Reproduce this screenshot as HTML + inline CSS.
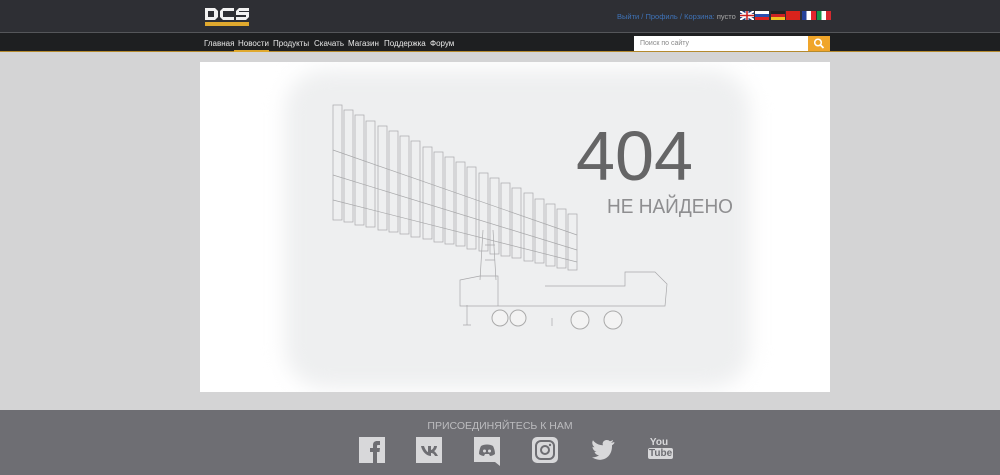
<!DOCTYPE html>
<html><head><meta charset="utf-8"><style>
*{margin:0;padding:0;box-sizing:border-box}
body{width:1000px;height:475px;overflow:hidden;background:#d4d4d5;font-family:"Liberation Sans",sans-serif;position:relative}
svg{display:block}
.top{position:absolute;left:0;top:0;width:1000px;height:33px;background:#2e2f34;border-bottom:1px solid #55565a}
.nav{position:absolute;left:0;top:33px;width:1000px;height:19px;background:#1e1f21;border-bottom:1px solid #b48a2e}
.nav a{position:absolute;top:6px;font-size:8px;color:#e8e8e8;text-decoration:none}
.links{position:absolute;left:617px;top:12px;font-size:7.5px;color:#3f73b8}
.links span{color:#aaa}
.flag{position:absolute;top:11px;width:14px;height:9px;overflow:hidden}
.search{position:absolute;left:634px;top:36px;width:174px;height:15px;background:#fff;font-size:7px;color:#888;padding:4px 6px}
.sbtn{position:absolute;left:808px;top:36px;width:22px;height:15px;background:#f0a52a}
.panel{position:absolute;left:200px;top:62px;width:630px;height:330px;background:#fff;overflow:hidden}
.cloud{position:absolute;left:85px;top:8px;width:465px;height:318px;background:#eeeff0;filter:blur(10px);border-radius:40px}
.footer{position:absolute;left:0;top:410px;width:1000px;height:65px;background:#6e6e73}
.ft{position:absolute;top:420px;left:0;width:1000px;text-align:center;font-size:10.5px;color:#bcbcbf}
.ic{position:absolute;top:437px;width:26px;height:26px}
</style></head><body>
<div class="top">
<svg style="position:absolute;left:204px;top:7px" width="46" height="20" viewBox="0 0 46 20">
<g fill="#f2f2f2"><path d="M1 1h10l3 3v6l-3 3H1zM4 4v6h6V4z"/><path d="M16 4l3-3h11v3H19v6h11v3H19l-3-3z"/><path d="M32 4l3-3h10v3H35v1h10v5l-3 3H32v-3h10V8H32z"/></g>
<rect x="1" y="15" width="44" height="4" fill="#e0a92e"/></svg>
<div class="links">Выйти / Профиль / Корзина: <span>пусто</span></div>
<div class="flag" style="left:740px;background:#233a7a"><svg width="14" height="9"><path d="M0 0L14 9M14 0L0 9" stroke="#fff" stroke-width="2"/><path d="M7 0v9M0 4.5h14" stroke="#fff" stroke-width="3"/><path d="M7 0v9M0 4.5h14" stroke="#c22" stroke-width="1.6"/></svg></div>
<div class="flag" style="left:755px;background:linear-gradient(#fff 33%,#2b4fb0 33% 66%,#d22 66%)"></div>
<div class="flag" style="left:771px;background:linear-gradient(#222 33%,#c22 33% 66%,#f0c020 66%)"></div>
<div class="flag" style="left:786px;background:#d8231c"></div>
<div class="flag" style="left:802px;background:linear-gradient(90deg,#23419a 33%,#fff 33% 66%,#e2262e 66%)"></div>
<div class="flag" style="left:817px;background:linear-gradient(90deg,#17954a 33%,#fff 33% 66%,#d42a2f 66%)"></div>
</div>
<div class="nav">
<a style="left:204px">Главная</a><a style="left:238px">Новости</a><a style="left:273px">Продукты</a><a style="left:314px">Скачать</a><a style="left:348px">Магазин</a><a style="left:384px">Поддержка</a><a style="left:430px">Форум</a>
<div style="position:absolute;left:234px;top:17px;width:35px;height:2px;background:#e0a92e"></div>
</div>
<div class="search">Поиск по сайту</div>
<div class="sbtn"><svg width="22" height="15"><circle cx="10" cy="6.5" r="3.3" stroke="#fff" stroke-width="1.5" fill="none"/><path d="M12.5 9l3 3" stroke="#fff" stroke-width="1.8"/></svg></div>
<div class="panel"><div class="cloud"></div></div>
<svg style="position:absolute;left:0;top:0" width="1000" height="475">
<g fill="none" stroke="#a8a8aa" stroke-width="0.7">
<rect x="333" y="105" width="9" height="115"/><rect x="344" y="110" width="9" height="112"/><rect x="355" y="115" width="9" height="110"/><rect x="366" y="121" width="9" height="106"/><rect x="378" y="126" width="9" height="104"/><rect x="389" y="131" width="9" height="101"/><rect x="400" y="136" width="9" height="98"/><rect x="411" y="141" width="9" height="96"/><rect x="423" y="147" width="9" height="92"/><rect x="434" y="152" width="9" height="90"/><rect x="445" y="157" width="9" height="87"/><rect x="456" y="162" width="9" height="84"/><rect x="467" y="167" width="9" height="82"/><rect x="479" y="173" width="9" height="78"/><rect x="490" y="178" width="9" height="76"/><rect x="501" y="183" width="9" height="73"/><rect x="512" y="188" width="9" height="70"/><rect x="524" y="193" width="9" height="68"/><rect x="535" y="199" width="9" height="64"/><rect x="546" y="204" width="9" height="62"/><rect x="557" y="209" width="9" height="59"/><rect x="568" y="214" width="9" height="56"/>
<path d="M333 150L577 235M333 175L577 250M333 200L577 262"/>
<path d="M483 230l-3 50M493 230l3 50M485 245h10M485 260h10"/>
<path d="M460 280l20-4h18v30h-38zM480 306h185l2-22-12-12h-30v14h-80"/>
<path d="M467 305v20M463 325h8M552 318v8"/>
</g>
<g fill="#f3f3f3" stroke="#aaa" stroke-width="1"><circle cx="500" cy="318" r="8"/><circle cx="518" cy="318" r="8"/><circle cx="580" cy="320" r="9"/><circle cx="613" cy="320" r="9"/></g>
<text x="576" y="180" font-family="Liberation Sans,sans-serif" font-size="70" fill="#656566" textLength="117" lengthAdjust="spacingAndGlyphs">404</text>
<text x="607" y="213" font-family="Liberation Sans,sans-serif" font-size="20" fill="#8e8e90" textLength="126" lengthAdjust="spacingAndGlyphs">НЕ НАЙДЕНО</text>
</svg>
<div class="footer"></div>
<div class="ft">ПРИСОЕДИНЯЙТЕСЬ К НАМ</div>
<svg class="ic" style="left:359px" viewBox="0 0 26 26"><rect width="26" height="26" fill="#d8d8da"/><path d="M14 26V15h-3v-4h3V8c0-3 2-4 4-4h3v4h-2c-1 0-1 .5-1 1v2h3l-.5 4H18v11z" fill="#6e6e73"/></svg>
<svg class="ic" style="left:416px" viewBox="0 0 26 26"><rect width="26" height="26" fill="#d8d8da"/><path d="M5 9h3c1 3 3 6 4 6V9h3v4c1 0 3-2 3-4h3c0 2-2 5-3 5 1 .5 3 3 4 5h-3c-1-2-2-3-4-3v3c-5 0-9-5-10-10z" fill="#6e6e73"/></svg>
<svg class="ic" style="left:474px;height:29px" viewBox="0 0 26 29"><path d="M0 0h26v29l-5-4H0z" fill="#d8d8da"/><path d="M7 9c3-2 9-2 12 0 1 2 2 5 2 8-2 1.5-4 2-5 2l-1-2h-4l-1 2c-1 0-3-.5-5-2 0-3 1-6 2-8z" fill="#6e6e73"/><circle cx="10.5" cy="14" r="1.5" fill="#d8d8da"/><circle cx="15.5" cy="14" r="1.5" fill="#d8d8da"/></svg>
<svg class="ic" style="left:532px" viewBox="0 0 26 26"><rect width="26" height="26" rx="5" fill="#d8d8da"/><rect x="4" y="4" width="18" height="18" rx="5" fill="none" stroke="#6e6e73" stroke-width="2"/><circle cx="13" cy="13" r="4" fill="none" stroke="#6e6e73" stroke-width="2"/><circle cx="18" cy="8" r="1.2" fill="#6e6e73"/></svg>
<svg class="ic" style="left:589px" viewBox="0 0 26 26"><path d="M25 5c-1 .5-2 .7-3 .8 1-.7 2-1.6 2-2.8-1 .6-2 1-3 1.2-2-2-6-1.5-7 1-.5 1-.5 2 0 3-4 0-8-2-10-5-1.5 2.5-.5 5.5 1.5 7-1 0-1.5-.3-2-.5 0 2.5 2 4.5 4 5-1 .3-1.5.3-2 .1.5 2 2.5 3.5 4.5 3.5-2 1.5-4.5 2.3-7 2 9 6 20 1 20-11v-1c1-.7 2-1.5 2.5-2.5z" fill="#d8d8da"/></svg>
<div style="position:absolute;left:648px;top:437px;width:22px;font-size:10px;line-height:11px;color:#d8d8da;text-align:center;font-weight:bold">You<br><span style="background:#d8d8da;color:#6e6e73;padding:0 1px;border-radius:2px">Tube</span></div>
</body></html>
